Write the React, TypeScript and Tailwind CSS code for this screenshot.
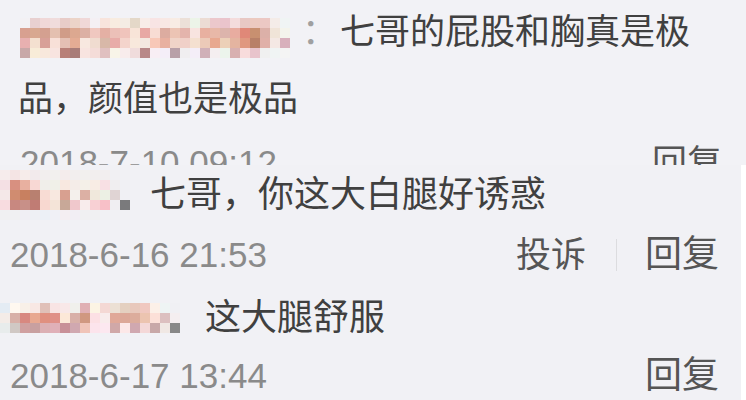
const FONT = "font-['Liberation_Sans','Noto_Sans_CJK_SC',sans-serif]";

// pixelated user names, one colour per 10px cell
const topName = [
  ["#f3f1f4", "#e8d0d0", "#f0d8d8", "#f0dcdc", "#e8ccc8", "#ecd4c8", "#f0d8d8", "#f4f0f4", "#f8e4dc", "#f8ece0", "#f4ece4", "#e4d8c8", "#f8ece8", "#f8e4e4", "#f8e8e4", "#f8ece4", "#ece0d8", "#ecf4e8", "#ecdcd4", "#ecc8cc", "#eac4cc", "#f4dcdc", "#e8c8c4", "#eccac0", "#ecc8c4", "#f4ece8", "#f0f4f4"],
  ["#d8a090", "#d8a890", "#d4a090", "#e4c0b0", "#d09c88", "#dca890", "#dcb0a4", "#f0c8c0", "#e4b0a4", "#ecc0b8", "#f0c4bc", "#f8e4d8", "#e8a8a4", "#f8dcd4", "#dcaca0", "#ecc4b4", "#e4b4ac", "#f8e4e0", "#e8b0a0", "#e8b8a8", "#dcb4ac", "#e8aca0", "#e08878", "#c89070", "#dcb0a8", "#f0e4d8", "#f4f4ec"],
  ["#e8b0b0", "#f4e0d0", "#d8a098", "#f8e0d8", "#e4c0b4", "#e4ac94", "#f8e8e0", "#f0dcd0", "#d8b8a8", "#e8aca8", "#f4d4cc", "#f8e8dc", "#f4e8e0", "#f8c8b8", "#e8b0a0", "#f0d4c8", "#f0d0c8", "#f4e0d0", "#eccab8", "#e8a890", "#ecd0b8", "#e4b4a0", "#e09880", "#b88068", "#e0b0a8", "#f4e8e4", "#d8b0bc"],
  ["#c8a8a8", "#f8ecd8", "#f8e8dc", "#f8e4e0", "#b88078", "#a87c78", "#f8e4e0", "#f4dcd8", "#e0c0c0", "#f8f4e8", "#f8ecec", "#f0dcdc", "#b88888", "#f8eef4", "#f4eef8", "#b8a0a8", "#f0eef0", "#f4eef8", "#d0b0b8", "#f4eef0", "#ecf4ec", "#d8b0b0", "#f8dcdc", "#e8c4cc", "#f0f0f0", "#f0f4f4", "#f4f4f4"],
];

const secondName = [
  ["#f6ecec", "#f4e4e4", "#f6ecea", "#f2eaec", "#f2eeee", "#f2f0ee", "#f4ecec", "#f2eeee", "#f2f0ee", "#f2eeee", "#f2eeef", "#f1f0f3", "#f1f1f4"],
  ["#f4e0e4", "#d89080", "#e8b0a0", "#f8d8d4", "#f0eeea", "#f0f0e8", "#f8e8e0", "#f4ece8", "#f4f0e8", "#f8ece4", "#f8e0e4", "#f0eef0", "#f0f0f4"],
  ["#f4e8e8", "#d08c70", "#c88060", "#b88070", "#f8dcd4", "#f8e8e0", "#d8a090", "#f4f0ec", "#dcb0a4", "#f0e8dc", "#ecf0e4", "#e0d4d4", "#f0f0f4"],
  ["#f8dce0", "#c88880", "#c89088", "#c07c74", "#f8d8d0", "#f4e4d8", "#c8a898", "#f0c8cc", "#f8ecec", "#f8d0d4", "#f8c0c8", "#f0eef2", "#7a7a7c"],
  ["#f0f0f2", "#f0f0f2", "#f0eef4", "#eef0f4", "#ecf0f6", "#f0f0f6", "#f4eef2", "#f2eef4", "#f0f0f2", "#f0f0f2", "#f1f1f4", "#f1f1f4", "#f1f1f4"],
];

const thirdName = [
  ["#e4ecf4", "#fff8f0", "#f8f0e8", "#f8e8e4", "#e0c0b8", "#f8e4e4", "#f8e8e8", "#f0f0ec", "#e0b0b4", "#fcf4e4", "#f4d8d4", "#ece0d4", "#e4d0c0", "#e8c8bc", "#f0c8c0", "#fcf0e8", "#eef4f4", "#f0f0f4"],
  ["#f4ece8", "#d8b0a8", "#d88880", "#e8a890", "#e09080", "#e09088", "#fce8d8", "#d8b0a8", "#d09880", "#fce0e4", "#f8ecec", "#e0a898", "#dca898", "#dcac9c", "#ecc4b0", "#fce0d8", "#dcc0c0", "#f4eef0"],
  ["#e8ecec", "#d0c8c4", "#d0a0a0", "#c8a0a0", "#dcb0b4", "#e0b0b8", "#c89098", "#d0a8b0", "#f0c4b8", "#fce4ec", "#fce8f0", "#d0a8a8", "#fce8e8", "#d0a8b0", "#f4d8d8", "#c8a8a8", "#f0e8e4", "#888888"],
];

const Mosaic = ({ rows }: { rows: string[][] }) => (
  <span className="inline-flex flex-col align-middle">
    {rows.map((row, i) => (
      <span key={i} className="flex">
        {row.map((c, j) => (
          <span key={j} className="block w-[10px] h-[10px]" style={{ backgroundColor: c }} />
        ))}
      </span>
    ))}
  </span>
);

export default function App() {
  return (
    <div className={`w-[746px] h-[400px] overflow-hidden bg-white ${FONT}`}>
      {/* first screenshot, cut off at the bottom */}
      <div className="h-[165px] overflow-hidden bg-[#f2f2f6] pl-[18px]">
        <p className="w-[704px] text-[35px] leading-[64px] text-[#404040]">
          <span className="inline-block ml-[2px] align-middle">
            <Mosaic rows={topName} />
          </span>
          <span className="inline-block w-[50px] text-[#a0a0a0] align-top">
            <span className="inline-block w-[12px]" />：
          </span>
          七哥的屁股和胸真是极品，颜值也是极品
        </p>
        <div className="flex items-center justify-between h-[64px] pl-[2px] pr-[24px]">
          <span className="text-[35px] text-[#8a8a8a]">2018-7-10 09:12</span>
          <span className="text-[35px] text-[#555]">回复</span>
        </div>
      </div>

      {/* second screenshot */}
      <div className="w-[741px] h-[235px] bg-[#f1f1f5]">
        <div className="flex items-center h-[60px] text-[36px] text-[#404040]">
          <Mosaic rows={secondName} />
          <span className="ml-[20px]">七哥，你这大白腿好诱惑</span>
        </div>
        <div className="flex items-center h-[60px] pl-[10px] pr-[22px] text-[35px]">
          <span className="text-[#8a8a8a]">2018-6-16 21:53</span>
          <span className="ml-auto text-[#555]">投诉</span>
          <span className="ml-[30px] mr-[28px] w-px h-[32px] bg-[#dcdcdf]" />
          <span className="text-[37px] text-[#555]">回复</span>
        </div>
        <div className="flex items-center h-[66px] text-[36px] text-[#404040]">
          <Mosaic rows={thirdName} />
          <span className="ml-[25px]">这大腿舒服</span>
        </div>
        <div className="flex items-center justify-between h-[50px] pl-[10px] pr-[22px] text-[35px]">
          <span className="text-[#8a8a8a]">2018-6-17 13:44</span>
          <span className="text-[37px] text-[#555]">回复</span>
        </div>
      </div>
    </div>
  );
}
